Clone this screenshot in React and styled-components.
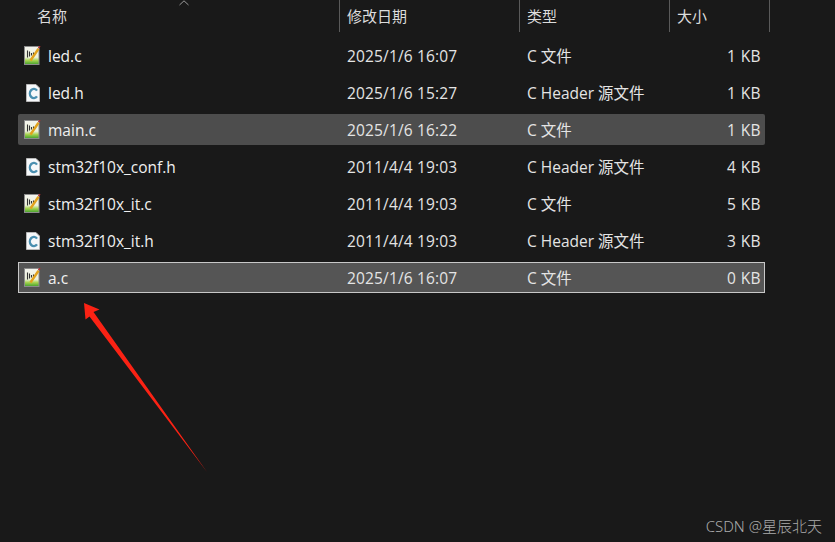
import React from 'react'
import styled, { createGlobalStyle } from 'styled-components'

const Global = createGlobalStyle`
html,body{
    margin:0;
    padding:0;
    background:#191919;
}
`

const FONT = `"Open Sans","Noto Sans CJK SC",sans-serif`

const Page = styled.div`
position:relative;
width:835px;
height:542px;
overflow:hidden;
background:#191919;
color:#f0f0f0;
font-family:${FONT};
font-size:15.5px;
line-height:20px;
`

const Header = styled.div`
display:grid;
grid-template-columns:340px 180px 150px 100px;
height:32px;
margin-bottom:8px;
`

const HeaderCell = styled.div`
position:relative;
display:flex;
align-items:center;
padding-left:${p => p.$pad || 7}px;
border-right:1px solid #5a5a5a;
box-sizing:border-box;
color:#dcdcdc;
font-size:15px;
`

const SortCaret = styled.svg`
position:absolute;
left:179px;
top:0;
`

const List = styled.div`
display:flex;
flex-direction:column;
gap:6px;
margin-left:18px;
width:747px;
`

const Row = styled.div`
display:grid;
grid-template-columns:322px 180px 150px 95px;
align-items:center;
height:31px;
box-sizing:border-box;
border-radius:${p => (p.$state === 'focus' ? 0 : 2)}px;
background:${p => (p.$state ? (p.$state === 'focus' ? '#555555' : '#4d4d4d') : 'transparent')};
border:${p => (p.$state === 'focus' ? '1px solid #c8c8c8' : '1px solid transparent')};
`

const NameCell = styled.div`
display:flex;
align-items:center;
height:100%;
`

const IconSlot = styled.span`
display:flex;
width:29px;
justify-content:flex-start;
padding-left:${p => p.$pad}px;
box-sizing:border-box;
`

const Cell = styled.div`
padding-left:${p => p.$left || 0}px;
color:#e4e4e4;
white-space:nowrap;
letter-spacing:${p => p.$track || 0}px;
`

const SizeCell = styled.div`
text-align:right;
padding-right:5px;
color:#e4e4e4;
letter-spacing:0.4px;
`

const Arrow = styled.svg`
position:absolute;
left:0;
top:0;
pointer-events:none;
`

const Watermark = styled.div`
position:absolute;
right:13px;
top:516px;
color:#ababab;
font-size:15px;
font-family:"Noto Sans","Noto Sans CJK SC",sans-serif;
font-weight:300;
`

const SourceIcon = () => (
    <svg width="17" height="20" viewBox="0 1 17 20">
        <defs>
            <linearGradient id="fill" x1="0" y1="0" x2="0" y2="1">
                <stop offset="0" stopColor="#f4f4ee" />
                <stop offset="0.6" stopColor="#eef2da" />
                <stop offset="0.78" stopColor="#a4d24e" />
                <stop offset="1" stopColor="#3f9e2c" />
            </linearGradient>
        </defs>
        <rect x="0.5" y="1.5" width="14.5" height="18" fill="url(#fill)" stroke="#8c8c8c" />
        <path d="M3.5 5.5v7M5.5 6.5v5M7.5 8v2.5M9.5 7.5v3" stroke="#333333" strokeWidth="1.1" />
        <path d="M6.5 15.5 L14.5 3.8" stroke="#e2a21c" strokeWidth="2.4" />
        <path d="M14.5 3 L16 1" stroke="#b03030" strokeWidth="1.4" />
    </svg>
)

const HeaderIcon = () => (
    <svg width="14" height="18" viewBox="0 0 14 18">
        <path d="M0.5 0.5H10L13.5 4V17.5H0.5Z" fill="#f6f8fa" stroke="#b8b8b8" />
        <path d="M11 6.6A4 4.6 0 1 0 11 12.4" fill="none" stroke="#4a8fb0" strokeWidth="2.4" />
    </svg>
)

const files = [
    { name: 'led.c', date: '2025/1/6 16:07', type: 'C 文件', size: '1 KB' },
    { name: 'led.h', date: '2025/1/6 15:27', type: 'C Header 源文件', size: '1 KB' },
    { name: 'main.c', date: '2025/1/6 16:22', type: 'C 文件', size: '1 KB', state: 'selected' },
    { name: 'stm32f10x_conf.h', date: '2011/4/4 19:03', type: 'C Header 源文件', size: '4 KB' },
    { name: 'stm32f10x_it.c', date: '2011/4/4 19:03', type: 'C 文件', size: '5 KB' },
    { name: 'stm32f10x_it.h', date: '2011/4/4 19:03', type: 'C Header 源文件', size: '3 KB' },
    { name: 'a.c', date: '2025/1/6 16:07', type: 'C 文件', size: '0 KB', state: 'focus' },
]

export default function App() {
    return (
        <Page>
            <Global />
            <Header>
                <HeaderCell $pad={37}>
                    名称
                    <SortCaret width="10" height="6" viewBox="0 0 10 6">
                        <path d="M0.5 5L5 0.8L9.5 5" fill="none" stroke="#9a9a9a" />
                    </SortCaret>
                </HeaderCell>
                <HeaderCell>修改日期</HeaderCell>
                <HeaderCell>类型</HeaderCell>
                <HeaderCell>大小</HeaderCell>
            </Header>
            <List>
                {files.map(f => (
                    <Row key={f.name} $state={f.state}>
                        <NameCell>
                            <IconSlot $pad={f.name.endsWith('.h') ? 7 : 5}>
                                {f.name.endsWith('.h') ? <HeaderIcon /> : <SourceIcon />}
                            </IconSlot>
                            {f.name}
                        </NameCell>
                        <Cell $left={6} $track={0.15}>{f.date}</Cell>
                        <Cell $left={6}>{f.type}</Cell>
                        <SizeCell>{f.size}</SizeCell>
                    </Row>
                ))}
            </List>
            <Arrow width="835" height="542" viewBox="0 0 835 542">
                <path d="M84 303 L99.5 309.5 L93.5 312 L207 472 L89.5 316.5 L85.5 319.5 Z" fill="#fb2214" />
            </Arrow>
            <Watermark>CSDN @星辰北天</Watermark>
        </Page>
    )
}
